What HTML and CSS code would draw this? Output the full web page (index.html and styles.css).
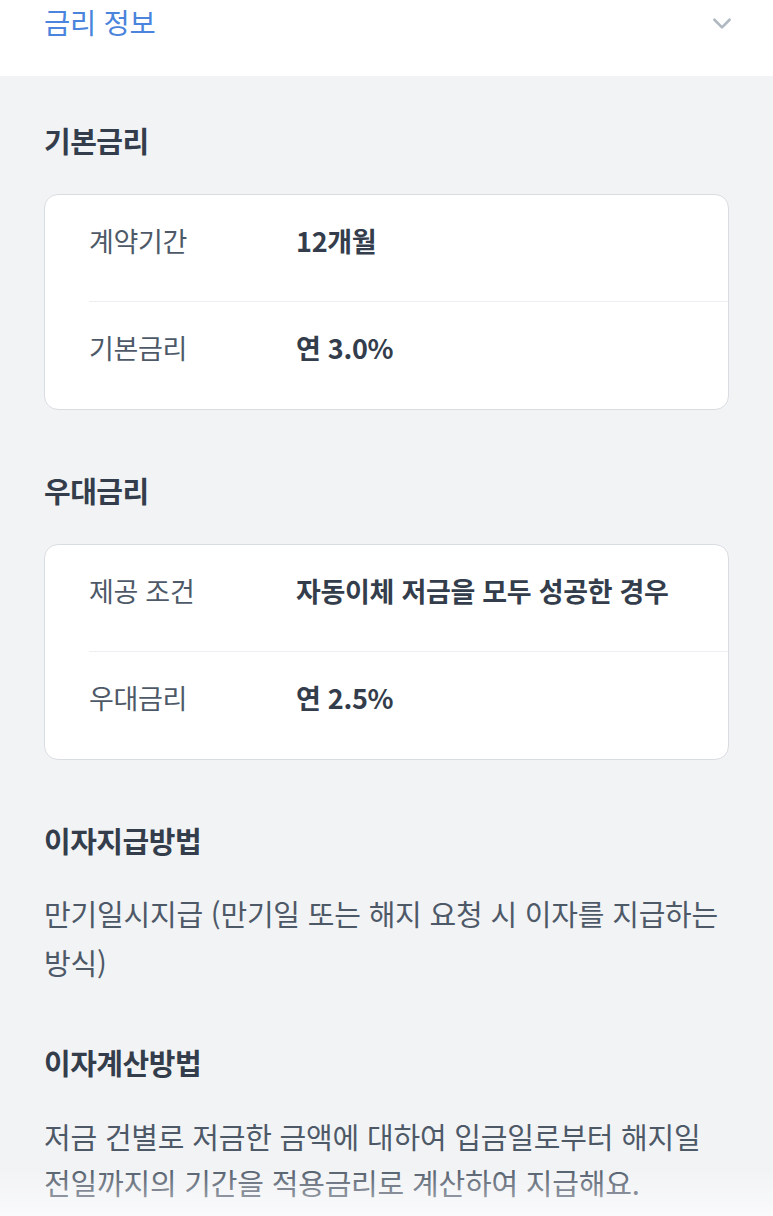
FILE: index.html
```html
<!DOCTYPE html>
<html lang="ko">
<head>
<meta charset="utf-8">
<link rel="stylesheet" href="styles.css">
</head>
<body>
<header class="header">
  <h1 class="header-title">금리 정보</h1>
  <svg class="chevron" viewBox="0 0 24 24" width="26" height="26"><polyline points="5,9 12,16 19,9" fill="none" stroke="#b0b8c1" stroke-width="2.4" stroke-linecap="round" stroke-linejoin="round"/></svg>
</header>
<main class="content">
  <section class="section">
    <h2 class="section-title">기본금리</h2>
    <div class="card">
      <div class="row">
        <span class="label">계약기간</span>
        <span class="value">12개월</span>
      </div>
      <div class="row">
        <span class="label">기본금리</span>
        <span class="value">연 3.0%</span>
      </div>
    </div>
  </section>
  <section class="section">
    <h2 class="section-title">우대금리</h2>
    <div class="card">
      <div class="row">
        <span class="label">제공 조건</span>
        <span class="value">자동이체 저금을 모두 성공한 경우</span>
      </div>
      <div class="row">
        <span class="label">우대금리</span>
        <span class="value">연 2.5%</span>
      </div>
    </div>
  </section>
  <section class="section section-pay">
    <h2 class="section-title">이자지급방법</h2>
    <p class="desc">만기일시지급 (만기일 또는 해지 요청 시 이자를 지급하는 방식)</p>
  </section>
  <section class="section section-last">
    <h2 class="section-title">이자계산방법</h2>
    <p class="desc">저금 건별로 저금한 금액에 대하여 입금일로부터 해지일 전일까지의 기간을 적용금리로 계산하여 지급해요.</p>
  </section>
</main>
<div class="fade"></div>
</body>
</html>
```

FILE: styles.css
```css
* { box-sizing: border-box; }
html, body {
  margin: 0;
  padding: 0;
}
body {
  background: #f2f3f5;
  font-family: "Noto Sans CJK KR", "Noto Sans", sans-serif;
  color: #333d4b;
  min-height: 1216px;
}
.header {
  background: #ffffff;
  height: 76px;
  padding: 0 38px 0 44px;
  display: flex;
  align-items: flex-start;
  justify-content: space-between;
}
.header-title {
  margin: 0;
  font-size: 28.5px;
  font-weight: 400;
  line-height: 44px;
  color: #4a84dc;
  letter-spacing: -0.3px;
}
.chevron {
  margin-top: 10px;
}
.content {
  padding: 46px 44px 0 44px;
}
.section {
  margin-bottom: 62px;
}
.section-title {
  margin: 0 0 36px 0;
  font-size: 29px;
  line-height: 36px;
  font-weight: 700;
  color: #333d4b;
  letter-spacing: -0.5px;
}
.card {
  background: #ffffff;
  border: 1px solid #d9dce1;
  border-radius: 14px;
  overflow: hidden;
}
.row {
  display: flex;
  align-items: center;
  margin-left: 44px;
  padding: 28px 0 42px 0;
  border-bottom: 1px solid #eceef1;
  font-size: 27px;
  line-height: 36px;
}
.row:last-child {
  border-bottom: none;
  padding-bottom: 43px;
}
.label {
  width: 207px;
  flex-shrink: 0;
  color: #4e5968;
  font-weight: 400;
  letter-spacing: -0.3px;
}
.value {
  color: #333d4b;
  font-weight: 700;
  letter-spacing: -0.3px;
}
.desc {
  margin: 0;
  font-size: 29px;
  color: #4e5968;
  word-break: keep-all;
  letter-spacing: -0.2px;
}
.section-pay {
  margin-bottom: 57px;
}
.section-pay .section-title {
  margin-bottom: 31px;
}
.section-pay .desc {
  line-height: 49px;
}
.section-last .section-title {
  margin-bottom: 33px;
}
.section-last .desc {
  line-height: 46px;
}
.fade {
  position: fixed;
  left: 0;
  right: 0;
  bottom: 0;
  height: 50px;
  background: linear-gradient(rgba(255,255,255,0), rgba(255,255,255,0.6));
  pointer-events: none;
}
```
